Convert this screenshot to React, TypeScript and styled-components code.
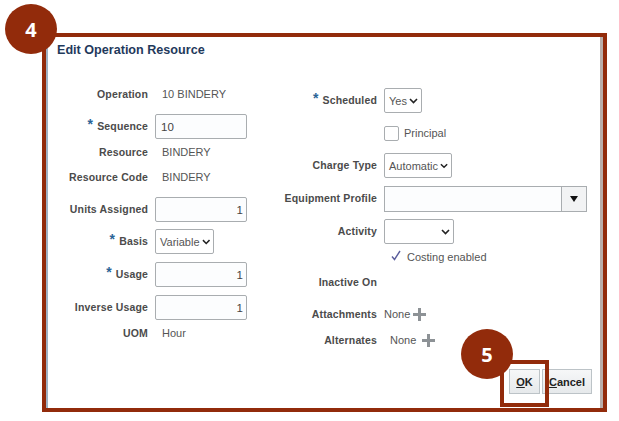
import styled, { createGlobalStyle } from 'styled-components';

const GlobalStyle = createGlobalStyle`
    html, body {
        margin: 0;
        background: #fff;
    }
    body {
        font-family: "Liberation Sans", Arial, sans-serif;
    }
`;

const FRAME = '#922b0b';

function Chevron() {
    return (
        <svg width="9" height="6" viewBox="0 0 9 6">
            <path d="M1 1l3.5 3.5L8 1" fill="none" stroke="#222" strokeWidth="1.6" />
        </svg>
    );
}

function Plus() {
    return (
        <svg width="13" height="13" viewBox="0 0 13 13">
            <path d="M5 0h3v5h5v3H8v5H5V8H0V5h5z" fill="#8d9296" />
        </svg>
    );
}

function Field({ label, required, top, children }: { label?: string; required?: boolean; top: number; children?: React.ReactNode }) {
    return (
        <Row $top={top}>
            <Label>
                {required && <Star>*</Star>}
                {label}
            </Label>
            {children}
        </Row>
    );
}

function Select({ value, width }: { value?: string; width: number }) {
    return (
        <SelectBox $width={width}>
            {value}
            <Chevron />
        </SelectBox>
    );
}

export default function App() {
    return (
        <Page>
            <GlobalStyle />
            <Dialog>
                <Badge $left={-41} $top={-33}>4</Badge>
                <Title>Edit Operation Resource</Title>

                <Columns>
                    <LeftColumn>
                        <Field label="Operation" top={0}><Value>10 BINDERY</Value></Field>
                        <Field label="Sequence" required top={7}><TextInput readOnly value="10" /></Field>
                        <Field label="Resource" top={1}><Value>BINDERY</Value></Field>
                        <Field label="Resource Code" top={0}><Value>BINDERY</Value></Field>
                        <Field label="Units Assigned" top={7}><NumberInput readOnly value="1" /></Field>
                        <Field label="Basis" required top={7}><Select value="Variable" width={59} /></Field>
                        <Field label="Usage" required top={8}><NumberInput readOnly value="1" /></Field>
                        <Field label="Inverse Usage" top={8}><NumberInput readOnly value="1" /></Field>
                        <Field label="UOM" top={1}><Value>Hour</Value></Field>
                    </LeftColumn>

                    <RightColumn>
                        <Field label="Scheduled" required top={0}><Select value="Yes" width={38} /></Field>
                        <Field top={8}>
                            <Checkbox />
                            <OptionText>Principal</OptionText>
                        </Field>
                        <Field label="Charge Type" top={7}><Select value="Automatic" width={68} /></Field>
                        <Field label="Equipment Profile" top={8}>
                            <Lookup>
                                <LookupButton><Arrow /></LookupButton>
                            </Lookup>
                        </Field>
                        <Field label="Activity" top={8}><Select width={70} /></Field>
                        <Field top={1}>
                            <CheckMark viewBox="0 0 10 11">
                                <path d="M1 6.5l2.5 3L9 1" fill="none" stroke="#5a5d9c" strokeWidth="1.4" />
                            </CheckMark>
                            <CostingText>Costing enabled</CostingText>
                        </Field>
                        <Field label="Inactive On" top={0} />
                        <Field label="Attachments" top={7}>
                            <NoneText $gap={-4}>None</NoneText>
                            <Plus />
                        </Field>
                        <Field label="Alternates" top={1}>
                            <NoneText $indent={6} $gap={-1}>None</NoneText>
                            <Plus />
                        </Field>
                    </RightColumn>
                </Columns>

                <Footer>
                    <Highlighted>
                        <Badge $left={-48} $top={-40}>5</Badge>
                        <Button><u>O</u>K</Button>
                    </Highlighted>
                    <Button $wide><u>C</u>ancel</Button>
                </Footer>
            </Dialog>
        </Page>
    );
}

const Page = styled.div`
    width: 619px;
    height: 421px;
    padding: 33px 12px 9px 42px;
    box-sizing: border-box;
    overflow: hidden;
`;

const Dialog = styled.div`
    position: relative;
    box-sizing: border-box;
    width: 565px;
    height: 379px;
    border: 4px solid ${FRAME};
    box-shadow: inset 2px 0 0 #9fb2c4, inset -3px 0 0 #b9aeaa;
    display: flex;
    flex-direction: column;
`;

const Badge = styled.div<{ $left: number; $top: number }>`
    position: absolute;
    left: ${({ $left }) => $left}px;
    top: ${({ $top }) => $top}px;
    z-index: 2;
    width: 52px;
    height: 50px;
    border-radius: 50%;
    background: ${FRAME};
    color: #fff;
    font-family: "Open Sans", sans-serif;
    font-size: 20px;
    font-weight: 700;
    display: flex;
    align-items: center;
    justify-content: center;
`;

const Title = styled.h1`
    margin: 5px 0 0 11px;
    font-size: 12.6px;
    line-height: 17px;
    font-weight: 700;
    color: #1f3a5c;
`;

const Columns = styled.div`
    display: flex;
    margin-top: 23px;
`;

const LeftColumn = styled.div`
    width: 109px;
    flex: 0 0 109px;
    display: flex;
    flex-direction: column;

    & > div > span:first-child {
        flex-basis: 102px;
    }
`;

const RightColumn = styled.div`
    margin-left: 130px;
    margin-top: 6px;
    display: flex;
    flex-direction: column;

    & > div > span:first-child {
        flex-basis: 102px;
        margin-left: -10px;
    }
`;

const Row = styled.div<{ $top: number }>`
    display: flex;
    align-items: center;
    gap: 7px;
    height: 25px;
    margin-top: ${({ $top }) => $top}px;
    white-space: nowrap;
`;

const Label = styled.span`
    flex: 0 0 auto;
    padding-bottom: 2px;
    text-align: right;
    font-size: 10.5px;
    font-weight: 700;
    letter-spacing: 0.15px;
    color: #4b4b4b;
`;

const Star = styled.span`
    color: #2a6496;
    font-size: 14px;
    margin-right: 4px;
    line-height: 0;
    position: relative;
    top: -1px;
`;

const Value = styled.span`
    margin-left: 7px;
    padding-bottom: 2px;
    font-size: 11px;
    color: #555;
`;

const TextInput = styled.input`
    box-sizing: border-box;
    width: 92px;
    height: 25px;
    padding: 0 3px 0 5px;
    border: 1px solid #a9adb0;
    border-radius: 2px;
    background: #fcfdfe;
    font: 11.5px "Liberation Sans", Arial, sans-serif;
    color: #444;
    outline: none;
`;

const NumberInput = styled(TextInput)`
    text-align: right;
`;

const SelectBox = styled.div<{ $width: number }>`
    box-sizing: border-box;
    width: ${({ $width }) => $width}px;
    height: 25px;
    padding: 0 3px 0 4px;
    border: 1px solid #a9adb0;
    border-radius: 2px;
    background: #fff;
    display: flex;
    align-items: center;
    justify-content: flex-end;
    gap: 2px;
    font-size: 11px;
    color: #555;
`;

const Checkbox = styled.div`
    box-sizing: border-box;
    width: 15px;
    height: 15px;
    border: 1px solid #a9adb0;
    border-radius: 2px;
    background: #fff;
`;

const OptionText = styled.span`
    padding-bottom: 2px;
    font-size: 11px;
    color: #555;
    margin-left: -2px;
`;

const Lookup = styled.div`
    box-sizing: border-box;
    width: 203px;
    height: 26px;
    border: 1px solid #a9adb0;
    background: #fcfdfe;
    display: flex;
    justify-content: flex-end;
`;

const LookupButton = styled.div`
    width: 24px;
    border-left: 1px solid #a9adb0;
    background: #f2f3f4;
    display: flex;
    align-items: center;
    justify-content: center;
`;

const Arrow = styled.div`
    width: 0;
    height: 0;
    border-left: 4px solid transparent;
    border-right: 4px solid transparent;
    border-top: 6px solid #111;
`;

const CheckMark = styled.svg`
    width: 10px;
    height: 11px;
    margin-left: 7px;
    margin-top: -4px;
`;

const CostingText = styled.span`
    padding-bottom: 2px;
    font-size: 11px;
    color: #555;
    margin-left: -1px;
`;

const NoneText = styled.span<{ $indent?: number; $gap?: number }>`
    padding-bottom: 2px;
    font-size: 11px;
    color: #555;
    margin-left: ${({ $indent }) => $indent ?? 0}px;
    margin-right: ${({ $gap }) => $gap ?? 0}px;
`;

const Footer = styled.div`
    margin-top: auto;
    margin-bottom: 14px;
    margin-right: 11px;
    display: flex;
    justify-content: flex-end;
    gap: 2px;
`;

const Highlighted = styled.div`
    position: relative;
    display: flex;

    &::after {
        content: "";
        position: absolute;
        inset: -9px -9px -13px -9px;
        border: 4px solid ${FRAME};
    }
`;

const Button = styled.button<{ $wide?: boolean }>`
    box-sizing: border-box;
    width: ${({ $wide }) => ($wide ? 50 : 31)}px;
    height: 25px;
    padding: 0;
    border: 1px solid #bcc3c7;
    background: linear-gradient(#f6f7f8, #e6e9eb);
    font: 700 11px "Liberation Sans", Arial, sans-serif;
    color: #222;
`;
